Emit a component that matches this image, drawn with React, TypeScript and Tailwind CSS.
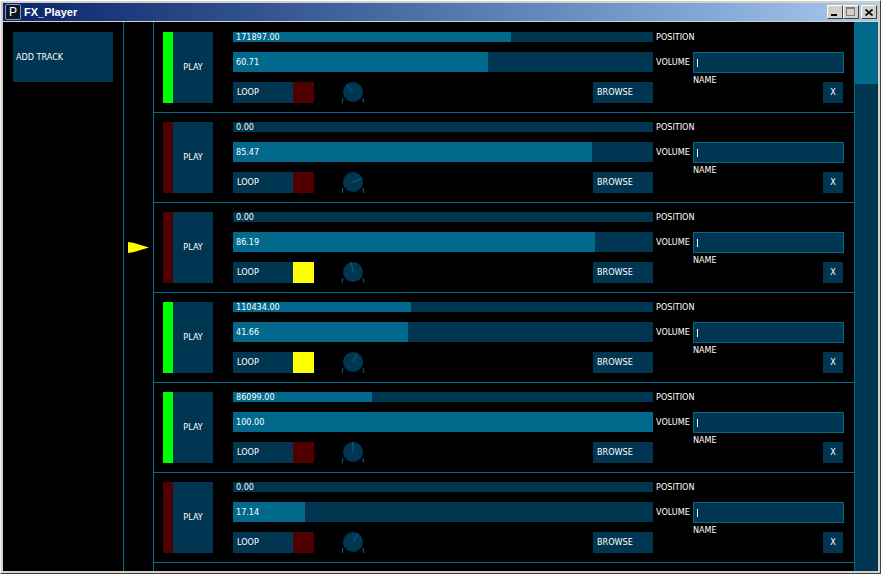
import React from 'react';

type Track = {
  playing: boolean;
  pos: string;
  posW: number;
  vol: string;
  loop: boolean;
  knob: number;
};

const tracks: Track[] = [
  { playing: true, pos: '171897.00', posW: 278, vol: '60.71', loop: false, knob: -132 },
  { playing: false, pos: '0.00', posW: 0, vol: '85.47', loop: false, knob: -22 },
  { playing: false, pos: '0.00', posW: 0, vol: '86.19', loop: true, knob: -100 },
  { playing: true, pos: '110434.00', posW: 178, vol: '41.66', loop: true, knob: -66 },
  { playing: true, pos: '86099.00', posW: 139, vol: '100.00', loop: false, knob: -92 },
  { playing: false, pos: '0.00', posW: 0, vol: '17.14', loop: false, knob: -58 },
];

function Knob({ angle }: { angle: number }) {
  const cx = 13;
  const cy = 10;
  const a = (angle * Math.PI) / 180;
  return (
    <svg width="26" height="21" viewBox="0 0 26 21" className="overflow-visible">
      <circle cx={cx} cy={cy} r="10" fill="#003652" />
      <line x1={cx} y1={cy} x2={cx + Math.cos(a) * 10} y2={cy + Math.sin(a) * 10} stroke="#00698c" strokeWidth="1" />
      <line x1={cx - 10} y1={cy + 6} x2={cx - 11} y2={cy + 11} stroke="#00698c" strokeWidth="1" />
      <line x1={cx + 10} y1={cy + 6} x2={cx + 11} y2={cy + 11} stroke="#00698c" strokeWidth="1" />
    </svg>
  );
}

function TrackRow({ t, first }: { t: Track; first: boolean }) {
  const volW = (parseFloat(t.vol) / 100) * 420;
  return (
    <div className={`flex border-b border-[#00698c] pl-[9px] pb-[9px] ${first ? 'pt-[10px]' : 'pt-[9px]'}`}>
      <div className={`h-[71px] w-[10px] ${t.playing ? 'bg-[#00ff00]' : 'bg-[#500000]'}`} />
      <div className="flex h-[71px] w-[40px] items-center justify-center bg-[#003652] text-white">PLAY</div>

      <div className="ml-[20px] flex w-[420px] flex-col">
        <div className="relative flex h-[10px] items-center bg-[#003652]">
          <div className="absolute inset-y-0 left-0 bg-[#00698c]" style={{ width: t.posW }} />
          <span className="relative pl-[3px] text-white">{t.pos}</span>
        </div>
        <div className="relative mt-[10px] flex h-[20px] items-center bg-[#003652]">
          <div className="absolute inset-y-0 left-0 bg-[#00698c]" style={{ width: volW }} />
          <span className="relative pl-[3px] text-white">{t.vol}</span>
        </div>
        <div className="mt-[10px] flex h-[21px] items-center">
          <div className="flex h-full w-[60px] items-center bg-[#003652] pl-[4px] text-white">LOOP</div>
          <div className={`h-full w-[21px] ${t.loop ? 'bg-[#ffff00]' : 'bg-[#500000]'}`} />
          <div className="ml-[26px]">
            <Knob angle={t.knob} />
          </div>
          <div className="ml-auto flex h-full w-[60px] items-center bg-[#003652] pl-[4px] text-white">BROWSE</div>
        </div>
      </div>

      <div className="flex w-[40px] flex-col pl-[3px] text-white">
        <div className="flex h-[10px] items-center">POSITION</div>
        <div className="mt-[10px] flex h-[20px] items-center">VOLUME</div>
      </div>

      <div className="flex w-[151px] flex-col pt-[20px]">
        <div className="flex h-[21px] items-center border border-[#00698c] bg-[#003652] pl-[3px]">
          <div className="h-[8px] w-px bg-white" />
        </div>
        <div className="flex h-[30px] items-start justify-between">
          <span className="mt-[3px] text-white">NAME</span>
          <div className="mr-px mt-[9px] flex h-[21px] w-[20px] items-center justify-center bg-[#003652] text-white">X</div>
        </div>
      </div>
    </div>
  );
}

export default function App() {
  return (
    <div className="h-[574px] w-[881px] border-t border-l border-t-white border-l-[#f0f0f0] border-r border-b border-r-[#404040] border-b-[#404040] bg-[#d4d0c8] p-[2px]">
      {/* title bar */}
      <div className="flex h-[18px] items-center bg-gradient-to-r from-[#0a246a] to-[#a6caf0] pl-[2px] font-['Liberation_Sans',sans-serif]">
        <div className="flex h-[16px] w-[16px] items-center justify-center rounded-[2px] border border-[#8a9ab0] bg-[#0d1826] text-[12px] leading-none text-white">
          P
        </div>
        <span className="ml-[3px] text-[11px] font-bold text-white">FX_Player</span>
        <div className="ml-auto flex items-center pr-px">
          <div className="flex h-[14px] w-[16px] items-end border border-t-white border-l-white border-r-[#404040] border-b-[#404040] bg-[#d4d0c8] pb-[2px] pl-[3px]">
            <div className="h-[2px] w-[6px] bg-black" />
          </div>
          <div className="flex h-[14px] w-[16px] items-start border border-t-white border-l-white border-r-[#404040] border-b-[#404040] bg-[#d4d0c8] pl-[2px] pt-px">
            <div className="h-[9px] w-[9px] border border-t-2 border-[#808080]" />
          </div>
          <div className="ml-[2px] flex h-[14px] w-[16px] items-center justify-center border border-t-white border-l-white border-r-[#404040] border-b-[#404040] bg-[#d4d0c8]">
            <svg width="8" height="7" viewBox="0 0 8 7">
              <path d="M0.5 0.5 L7.5 6.5 M7.5 0.5 L0.5 6.5" stroke="black" strokeWidth="1.6" />
            </svg>
          </div>
        </div>
      </div>

      {/* content */}
      <div className="mt-px flex h-[549px] overflow-hidden bg-black font-['Liberation_Sans_Narrow','DejaVu_Sans_Condensed','Liberation_Sans',sans-serif] text-[9px] leading-none">
        <div className="w-[121px] border-r border-[#00698c] pl-[10px] pt-[10px]">
          <div className="flex h-[50px] w-[100px] items-center bg-[#003652] pl-[3px] text-white">ADD TRACK</div>
        </div>
        <div className="w-[30px] border-r border-[#00698c] pl-[4px] pt-[220px]">
          <svg width="21" height="11" viewBox="0 0 21 11">
            <polygon points="0,0 6,1 21,5.5 6,10 0,11" fill="#ffff00" />
          </svg>
        </div>
        <div className="flex w-[700px] flex-col">
          {tracks.map((t, i) => (
            <TrackRow key={i} t={t} first={i === 0} />
          ))}
        </div>
        <div className="flex w-[24px] flex-col">
          <div className="h-[61px] bg-[#00698c]" />
          <div className="flex-1 border-l border-t border-[#00698c] bg-[#003652]" />
        </div>
      </div>
    </div>
  );
}
